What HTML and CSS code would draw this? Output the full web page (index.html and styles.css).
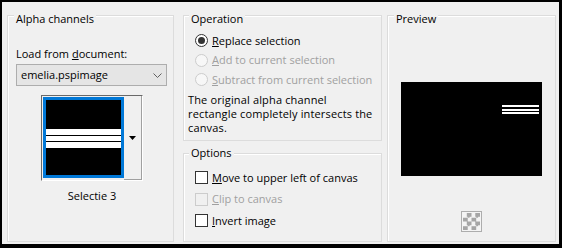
FILE: index.html
```html
<!DOCTYPE html>
<html lang="en">
<head>
  <meta charset="UTF-8" />
  <title>Load Selection From Alpha Channel</title>
  <link rel="stylesheet" href="styles.css">
</head>
<body>

<div class="dialog">
  <!-- Alpha channels -->
  <section class="group group-alpha">
    <span class="group-title">Alpha channels</span>
    <div class="alpha-body">
      <label class="field-label">Load from <u>d</u>ocument:</label>
      <div class="combo">
        <span>emelia.pspimage</span>
        <svg class="chevron" width="9" height="5" viewBox="0 0 9 5"><polyline points="0.5,0.5 4.5,4.5 8.5,0.5" fill="none" stroke="#606060" stroke-width="1"/></svg>
      </div>
      <div class="thumb-picker">
        <div class="thumb"></div>
        <div class="thumb-drop">
          <svg width="7" height="4" viewBox="0 0 7 4"><polygon points="0,0 7,0 3.5,4" fill="#000"/></svg>
        </div>
      </div>
      <div class="thumb-name">Selectie 3</div>
    </div>
  </section>

  <div class="col-mid">
    <!-- Operation -->
    <section class="group group-operation">
      <span class="group-title">Operation</span>
      <div class="choice-list">
        <div class="choice"><span class="radio checked"></span><span><u>R</u>eplace selection</span></div>
        <div class="choice disabled"><span class="radio"></span><span><u>A</u>dd to current selection</span></div>
        <div class="choice disabled"><span class="radio"></span><span><u>S</u>ubtract from current selection</span></div>
      </div>
      <p class="note">The original alpha channel<br>rectangle completely intersects the<br>canvas.</p>
    </section>

    <!-- Options -->
    <section class="group group-options">
      <span class="group-title">Options</span>
      <div class="choice-list">
        <div class="choice check-row"><span class="checkbox"></span><span><u>M</u>ove to upper left of canvas</span></div>
        <div class="choice check-row disabled"><span class="checkbox"></span><span><u>C</u>lip to canvas</span></div>
        <div class="choice check-row"><span class="checkbox"></span><span><u>I</u>nvert image</span></div>
      </div>
    </section>
  </div>

  <!-- Preview -->
  <section class="group group-preview">
    <span class="group-title">Preview</span>
    <svg class="preview" width="141" height="94" viewBox="0 0 141 94">
      <rect width="141" height="94" fill="#000"/>
      <rect x="101" y="23" width="37" height="2" fill="#fff"/>
      <rect x="101" y="27" width="37" height="2" fill="#fff"/>
      <rect x="101" y="30" width="37" height="2" fill="#fff"/>
    </svg>
    <div class="checker-btn"><div class="checker"></div></div>
  </section>
</div>

</body>
</html>
```

FILE: styles.css
```css
* { margin: 0; padding: 0; box-sizing: border-box; }

body {
  font-family: 'Open Sans', 'Noto Sans', sans-serif;
  font-size: 11px;
  line-height: 16px;
  color: #000;
  background: #f0f0f0;
}

.dialog {
  width: 562px;
  height: 248px;
  display: flex;
  padding: 13px 3px 2px 5px;
  background: #f0f0f0;
  border: solid #000;
  border-width: 2px 3px 4px 2px;
}

/* group boxes */
.group {
  display: flex;
  flex-direction: column;
  border: 1px solid #dcdcdc;
  box-shadow: inset 1px 1px 0 #fff;
}

.group-title {
  align-self: flex-start;
  margin: -5px 0 0 6px;
  padding: 0 2px;
  background: #f0f0f0;
}

.group-alpha { width: 167px; }
.group-preview { width: 169px; margin-left: 5px; align-items: center; }
.group-preview .group-title { margin-left: 6px; }

.col-mid {
  width: 199px;
  margin-left: 9px;
  display: flex;
  flex-direction: column;
  gap: 12px;
}

.group-operation { height: 126px; }
.group-options { height: 89px; }
.group-operation .group-title { margin-left: 5px; }
.group-options .group-title { margin: -9px 0 0 5px; }

/* alpha channels */
.alpha-body {
  display: flex;
  flex-direction: column;
  padding-left: 8px;
}

.field-label { margin-top: 19px; }

.combo {
  display: flex;
  align-items: center;
  width: 151px;
  height: 22px;
  margin-top: 2px;
  padding: 0 4px;
  border: 1px solid #adadad;
  background: #e5e5e5;
}

.chevron { margin-left: auto; }

.thumb-picker {
  display: flex;
  width: 102px;
  height: 86px;
  margin: 9px 0 0 25px;
  border: 1px solid;
  border-color: #696969 #fff #fff #696969;
}

.thumb {
  width: 81px;
  height: 81px;
  margin: 1px 0 2px 1px;
  border: 3px solid #0078d7;
  background: linear-gradient(to bottom,
    #000 0 29px, #fff 29px 35px, #000 35px 36px,
    #fff 36px 41px, #000 41px 42px, #fff 42px 48px, #000 48px);
}

.thumb-drop {
  width: 18px;
  display: flex;
  align-items: center;
  justify-content: center;
  border-right: 1px solid #a0a0a0;
  border-bottom: 1px solid #a0a0a0;
  background: #f0f0f0;
}

.thumb-name {
  width: 102px;
  margin: 7px 0 0 25px;
  text-align: center;
}

/* radios and checkboxes */
.choice-list { margin-top: 4px; }

.choice {
  display: flex;
  align-items: center;
  height: 19.5px;
  padding-left: 11px;
  gap: 4px;
}

.group-options .choice-list { margin-top: 6px; }
.check-row { height: 21.5px; }

.choice.disabled { color: #a0a0a0; }

.radio {
  width: 13px;
  height: 13px;
  border-radius: 50%;
  border: 1px solid #333;
  background: #fff;
  display: flex;
  align-items: center;
  justify-content: center;
}

.radio.checked::after {
  content: "";
  width: 7px;
  height: 7px;
  border-radius: 50%;
  background: #333;
}

.disabled .radio {
  border-color: #cccccc;
  background: #f7f7f7;
}

.checkbox {
  width: 13px;
  height: 13px;
  border: 1px solid #333;
  background: #fff;
}

.disabled .checkbox {
  border-color: #cccccc;
  background: #f0f0f0;
}

.note {
  margin: 3px 2px 0 4px;
  line-height: 14px;
  letter-spacing: 0.15px;
  white-space: nowrap;
}

/* preview */
.preview { margin-top: 55px; display: block; }

.checker-btn {
  width: 21px;
  height: 21px;
  margin-top: 35px;
  padding: 1px;
  border: 1px solid #adadad;
  background: #f4f4f4;
}

.checker {
  width: 17px;
  height: 17px;
  background: repeating-conic-gradient(#a6a6a6 0 25%, #f4f4f4 0 50%) 0 0 / 8.5px 8.5px;
}
```
